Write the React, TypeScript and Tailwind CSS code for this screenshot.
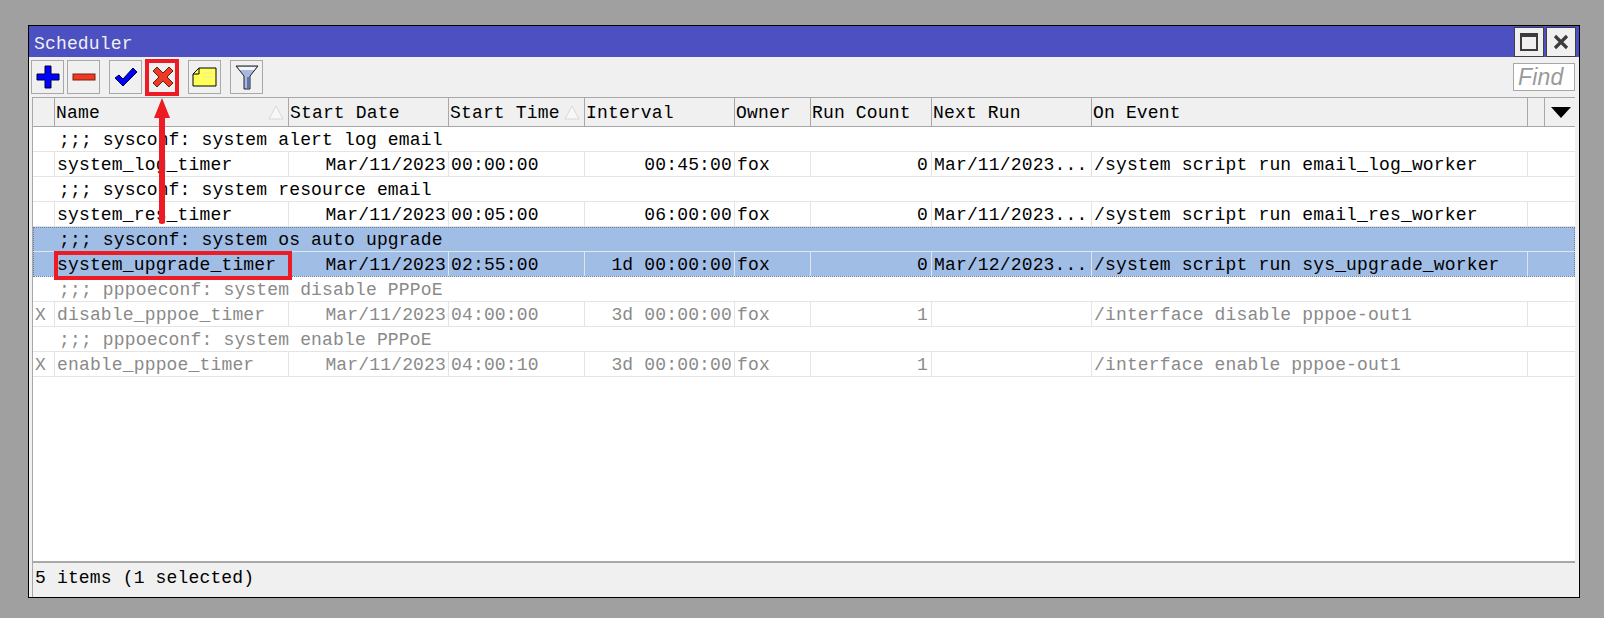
const COLS = 'grid grid-cols-[22px_234px_160px_136px_150px_76px_121px_160px_436px_17px_31px]';
const FONT = "font-['Liberation_Mono','DejaVu_Sans_Mono',monospace] text-[18px] tracking-[0.16px]";

const HEADERS = ['', 'Name', 'Start Date', 'Start Time', 'Interval', 'Owner', 'Run Count', 'Next Run', 'On Event', ''];

type Row = {
  comment: string;
  flag?: string;
  name: string;
  date: string;
  time: string;
  interval: string;
  count: string;
  next: string;
  event: string;
  selected?: boolean;
  disabled?: boolean;
};

const ROWS: Row[] = [
  { comment: ';;; sysconf: system alert log email', name: 'system_log_timer', date: 'Mar/11/2023', time: '00:00:00', interval: '00:45:00', count: '0', next: 'Mar/11/2023...', event: '/system script run email_log_worker' },
  { comment: ';;; sysconf: system resource email', name: 'system_res_timer', date: 'Mar/11/2023', time: '00:05:00', interval: '06:00:00', count: '0', next: 'Mar/11/2023...', event: '/system script run email_res_worker' },
  { comment: ';;; sysconf: system os auto upgrade', name: 'system_upgrade_timer', date: 'Mar/11/2023', time: '02:55:00', interval: '1d 00:00:00', count: '0', next: 'Mar/12/2023...', event: '/system script run sys_upgrade_worker', selected: true },
  { comment: ';;; pppoeconf: system disable PPPoE', flag: 'X', name: 'disable_pppoe_timer', date: 'Mar/11/2023', time: '04:00:00', interval: '3d 00:00:00', count: '1', next: '', event: '/interface disable pppoe-out1', disabled: true },
  { comment: ';;; pppoeconf: system enable PPPoE', flag: 'X', name: 'enable_pppoe_timer', date: 'Mar/11/2023', time: '04:00:10', interval: '3d 00:00:00', count: '1', next: '', event: '/interface enable pppoe-out1', disabled: true },
];

function ToolButton({ children, className = '' }: { children: React.ReactNode; className?: string }) {
  return (
    <div className={`flex h-[34px] w-[33px] items-center justify-center border border-[#a8a8a8] bg-[#f0f0f0] ${className}`}>
      {children}
    </div>
  );
}

function SortMark() {
  return (
    <svg width="16" height="15" viewBox="0 0 16 15" className="shrink-0">
      <path d="M8 1 L15 14 L1 14 Z" fill="#f8f8f8" stroke="#d8d8d8" strokeWidth="1" />
    </svg>
  );
}

function Cell({ text, right, className = '' }: { text?: string; right?: boolean; className?: string }) {
  return (
    <div className={`flex h-full items-center overflow-hidden whitespace-nowrap border-r border-[#e4e4e4] pt-[2px] ${right ? 'justify-end pr-[2px]' : 'pl-[2px]'} ${className}`}>
      {text}
    </div>
  );
}

function TableRow({ row }: { row: Row }) {
  const tone = row.disabled ? 'text-[#8a8a8a]' : 'text-black';
  const bg = row.selected ? 'bg-[#a0bde6]' : 'bg-white';
  const sep = row.selected ? 'border-[#dfe6f2]' : 'border-[#e4e4e4]';
  return (
    <div className={`${bg} ${tone} ${row.selected ? 'outline-1 -outline-offset-1 outline-dotted outline-[#6f7f99]' : ''}`}>
      <div className={`flex h-[25px] items-center border-b pl-[26px] pt-[2px] ${sep}`}>{row.comment}</div>
      <div className={`${COLS} h-[25px] border-b ${sep}`}>
        <Cell text={row.flag} className="pl-[0px]" />
        <Cell text={row.name} />
        <Cell text={row.date} right />
        <Cell text={row.time} />
        <Cell text={row.interval} right />
        <Cell text="fox" />
        <Cell text={row.count} right className="pr-[3px]" />
        <Cell text={row.next} className="pl-[1px]" />
        <Cell text={row.event} />
      </div>
    </div>
  );
}

export default function App() {
  return (
    <div className="h-[618px] w-[1604px] overflow-hidden bg-[#a0a0a0] pl-[28px] pt-[25px]">
      <div className={`relative flex h-[573px] w-[1552px] flex-col border border-black bg-[#f0f0f0] text-black ${FONT}`}>
        {/* title bar */}
        <div className="flex h-[31px] shrink-0 items-center justify-between bg-[#4c50c0] pl-[5px] pr-[3px] text-[#f0f0f0]">
          <span className="pt-[6px]">Scheduler</span>
          <div className="flex gap-[2px]">
            <div className="flex h-[30px] w-[30px] items-center justify-center border border-[#404040] bg-[#f0f0f0]">
              <div className="h-[18px] w-[18px] border-2 border-t-[4px] border-[#3c3c3c]" />
            </div>
            <div className="flex h-[30px] w-[30px] items-center justify-center border border-[#404040] bg-[#f0f0f0]">
              <svg width="16" height="16" viewBox="0 0 16 16">
                <path d="M2 2 L14 14 M14 2 L2 14" stroke="#3c3c3c" strokeWidth="3.2" />
              </svg>
            </div>
          </div>
        </div>

        {/* toolbar */}
        <div className="flex h-[40px] shrink-0 items-center pl-[2px] pr-[4px]">
          <ToolButton>
            <svg width="24" height="24" viewBox="0 0 24 24">
              <path d="M9 1 H15 V9 H23 V15 H15 V23 H9 V15 H1 V9 H9 Z" fill="#0000ff" stroke="#000030" strokeWidth="1" />
            </svg>
          </ToolButton>
          <ToolButton className="ml-[3px]">
            <svg width="24" height="10" viewBox="0 0 24 10">
              <rect x="1" y="2" width="22" height="6" fill="#ee3a24" stroke="#7a2010" strokeWidth="1" />
            </svg>
          </ToolButton>
          <ToolButton className="ml-[9px]">
            <svg width="24" height="22" viewBox="0 0 24 22">
              <path d="M1 12 L5 9 L9 13 L19 2 L23 6 L9 20 Z" fill="#0000ff" stroke="#000030" strokeWidth="1" strokeLinejoin="round" />
            </svg>
          </ToolButton>
          <ToolButton className="ml-[4px]">
            <svg width="24" height="24" viewBox="0 0 24 24">
              <path d="M6 2 L12 8 L18 2 L22 6 L16 12 L22 18 L18 22 L12 16 L6 22 L2 18 L8 12 L2 6 Z" fill="#ee3a24" stroke="#6a2010" strokeWidth="1" />
            </svg>
          </ToolButton>
          <ToolButton className="ml-[9px]">
            <svg width="25" height="20" viewBox="0 0 25 20">
              <path d="M7 1 H24 V19 H1 V7 Z" fill="#ffff55" stroke="#000" strokeWidth="1" />
              <path d="M1 7 H7 V1" fill="none" stroke="#000" strokeWidth="1" />
              <path d="M11 6 H21 M11 10 H21" stroke="#e8e8c0" strokeWidth="1" />
            </svg>
          </ToolButton>
          <ToolButton className="ml-[9px]">
            <svg width="24" height="26" viewBox="0 0 24 26">
              <path d="M1 2 H23 L15 12 V25 H9 V12 Z" fill="#a9b8de" stroke="#202020" strokeWidth="1" />
              <path d="M3 3 H21 L19 6 H5 Z" fill="#f4f6fb" />
              <path d="M12 13 H14.5 V24 H12 Z" fill="#5f74ad" />
            </svg>
          </ToolButton>
          <div className="ml-auto flex h-[28px] w-[62px] items-center border border-[#a8a8a8] bg-white pl-[4px] font-['Liberation_Sans',sans-serif] text-[23px] italic text-[#9a9a9a]">
            Find
          </div>
        </div>

        {/* table */}
        <div className="ml-[3px] mr-[4px] flex min-h-0 flex-1 flex-col border-l border-[#a8a8a8]">
          <div className={`${COLS} h-[30px] shrink-0 border-y border-[#a8a8a8] bg-[#f0f0f0]`}>
            {HEADERS.map((h, i) => (
              <div key={i} className="flex items-center justify-between overflow-hidden whitespace-nowrap border-r border-[#a8a8a8] pl-[1px] pr-[4px]">
                <span className="pt-[2px]">{h}</span>
                {h === 'Name' && <SortMark />}
                {h === 'Start Time' && <SortMark />}
              </div>
            ))}
            <div className="flex items-center justify-center">
              <svg width="20" height="11" viewBox="0 0 20 11">
                <path d="M0 0 H20 L10 11 Z" fill="#000" />
              </svg>
            </div>
          </div>
          <div className="min-h-0 flex-1 bg-white">
            {ROWS.map((row) => (
              <TableRow key={row.name} row={row} />
            ))}
          </div>
          <div className="flex h-[36px] shrink-0 items-center border-t-2 border-[#a8a8a8] pl-[2px] pb-[4px]">
            5 items (1 selected)
          </div>
        </div>

        {/* red annotations over the window */}
        <div className="pointer-events-none absolute left-[116px] top-[33px] h-[37px] w-[34px] border-[4px] border-[#ed1c24]" />
        <div className="pointer-events-none absolute left-[25px] top-[225px] h-[29px] w-[238px] border-[4px] border-[#ed1c24]" />
        <svg className="pointer-events-none absolute left-[123px] top-[71px]" width="20" height="128" viewBox="0 0 20 128">
          <path d="M10 1 L18 21 H13 V126 Q10 128 7 126 V21 H2 Z" fill="#ed1c24" />
        </svg>
      </div>
    </div>
  );
}
